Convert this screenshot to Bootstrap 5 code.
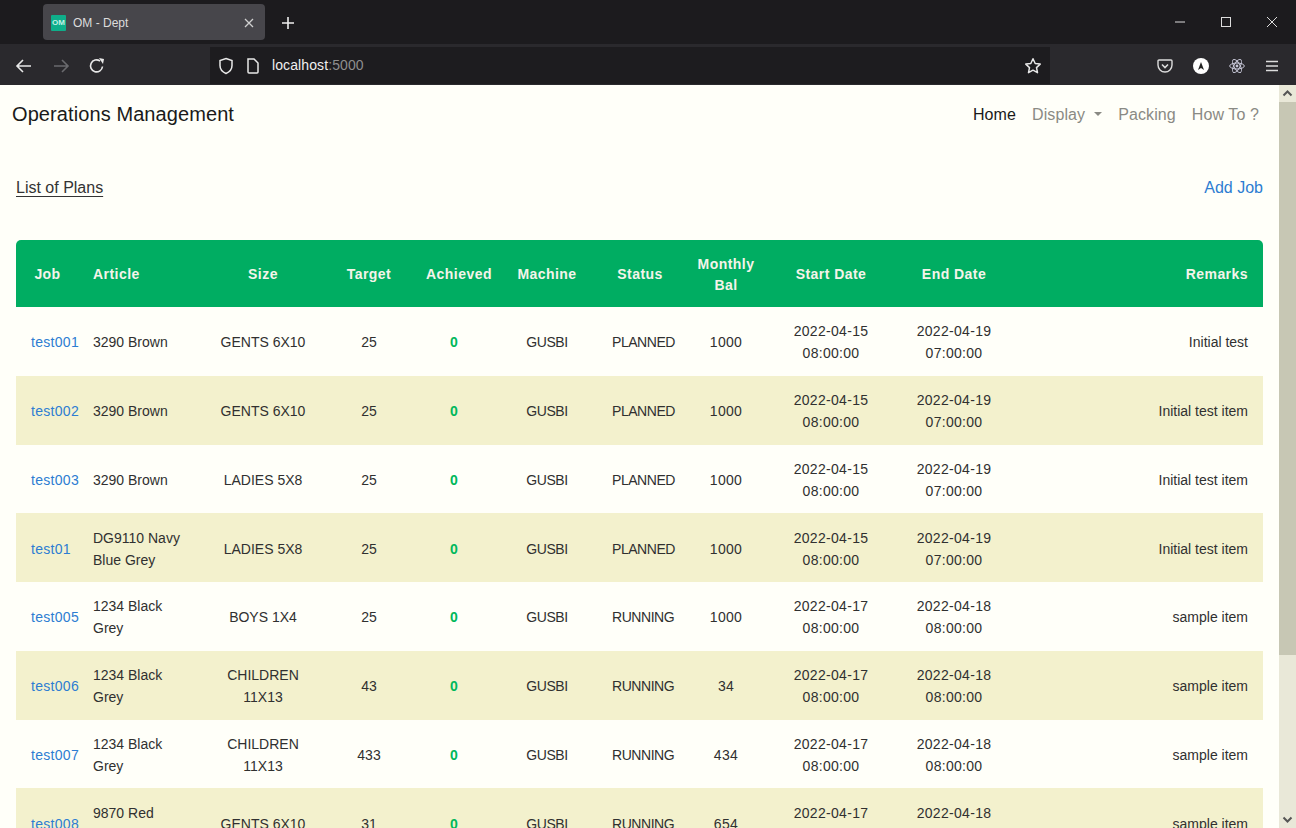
<!DOCTYPE html>
<html lang="en">
<head>
<meta charset="utf-8">
<title>OM - Dept</title>
<link href="https://cdn.jsdelivr.net/npm/bootstrap@5.3.0/dist/css/bootstrap.min.css" rel="stylesheet">
<style>
html,body{height:828px;overflow:hidden;background:#fffff9;font-family:"Liberation Sans",Arial,sans-serif}
.tabstrip{height:44px;background:#1c1b1e;padding-left:43px;padding-top:4px}
.tabbox{width:222px;height:36px;background:#47464b;border-radius:4px;color:#dcdcdc;font-size:12px;padding:1px 11px 0 8px}
.tabname{margin-left:-1px}
.favi{width:15px;height:16px;background:#0fae8a;color:#c4f0e6;font-size:8px;font-weight:700;line-height:16px;text-align:center;border-radius:1px}
.tabplus{margin:12px 0 0 16px}
.winbtns{padding-right:19px;gap:36px;height:36px}
.toolbar{height:41px;background:#2a292d;padding:2px 17px 0 15px}
.navbtns{gap:19px}
.urlbox{margin-left:105px;width:840px;height:37px;background:#1d1c1f;color:#f0f0f0;font-size:14px;padding:0 8px 0 8px}
.urlbox small{color:#8e8e8e;font-size:14px}
.docicon{margin-left:12px}
.hostname{margin-left:12px;letter-spacing:.1px}
.rightbtns{gap:20px}
.pagewrap{height:743px}
.pagebody{flex:1 1 auto;min-width:0;overflow:hidden}
.vscroll{width:17px;flex:none;background:#e9e8d8}
.vthumb{height:553px;background:#c7c7b4}
.appbar{height:57px;padding:1px 12px 0 12px}
.appbrand{font-size:20px;color:#1a1a1a;letter-spacing:.09px}
.appbar .nav{margin-top:2px}
.appbar .nav-link{color:#8a8a84;font-size:16px;padding:8px;letter-spacing:.1px}
.appbar .nav-link.now{color:#1a1a1a}
.appbar .dropdown-toggle::after{margin-left:.56em}
.headline{padding:0 16px;margin-top:33px;height:25px;font-size:16px}
.headline .plans{color:#333;text-decoration:underline;text-underline-offset:3px}
.headline .addjob{color:#2d7dd2;text-decoration:none}
.tablewrap{padding:0 16px;margin-top:40px}
.plan{table-layout:fixed;width:1247px;font-size:14px;line-height:22px;color:#2b2b2b;margin:0;border-collapse:separate;border-spacing:0}
.plan th{background:#00ad62;color:#f4f4ea;font-size:14px;font-weight:700;letter-spacing:.45px;line-height:21px;padding:13px 0 11px;height:67px;text-align:center;vertical-align:middle;border:0}
.plan th:first-child{border-top-left-radius:5px}
.plan th:last-child{border-top-right-radius:5px}
.plan td{height:68.75px;padding:13px 14px 11px;text-align:center;vertical-align:middle;border:0;background:transparent;color:#303030}
.plan tbody tr:nth-child(even) td{background:#f3f1cd}
.plan th.lft,.plan td.lft{text-align:left;padding-left:14px}
.plan th.rgt,.plan td.rgt{text-align:right;padding-right:15px}
.plan td.jobc{padding:13px 0 11px 15px;text-align:left;letter-spacing:.3px}
.plan td a{color:#2d7dd2;text-decoration:none}
.plan td.zero{color:#00b85c;font-weight:700;padding-right:24px}
.plan td.caps{letter-spacing:-.45px}
.plan td.statc{text-align:left;padding-left:24px;padding-right:0;letter-spacing:-.45px}
.plan td.numc{letter-spacing:.3px}
</style>
</head>
<body class="m-0">
<div class="tabstrip d-flex align-items-start">
  <div class="tabbox d-flex align-items-center gap-2">
    <span class="favi">OM</span><span class="tabname flex-grow-1">OM - Dept</span>
    <svg width="10" height="10" viewBox="0 0 10 10"><path d="M1 1l8 8M9 1l-8 8" stroke="#d0d0d0" stroke-width="1.3"/></svg>
  </div>
  <svg class="tabplus" width="14" height="14" viewBox="0 0 14 14"><path d="M7 1v12M1 7h12" stroke="#eee" stroke-width="1.6"/></svg>
  <div class="winbtns d-flex align-items-center ms-auto">
    <svg width="10" height="10" viewBox="0 0 10 10"><path d="M0 5h10" stroke="#ddd" stroke-width="1"/></svg>
    <svg width="10" height="10" viewBox="0 0 10 10"><rect x=".5" y=".5" width="9" height="9" fill="none" stroke="#ddd"/></svg>
    <svg width="10" height="10" viewBox="0 0 10 10"><path d="M0 0l10 10M10 0L0 10" stroke="#ddd"/></svg>
  </div>
</div>
<div class="toolbar d-flex align-items-center">
  <div class="navbtns d-flex align-items-center">
    <svg width="18" height="16" viewBox="0 0 18 16"><path d="M16 8H2M8 2L2 8l6 6" fill="none" stroke="#e8e8e8" stroke-width="1.6"/></svg>
    <svg width="18" height="16" viewBox="0 0 18 16"><path d="M2 8h14M10 2l6 6-6 6" fill="none" stroke="#6a6a6e" stroke-width="1.6"/></svg>
    <svg width="16" height="16" viewBox="0 0 16 16"><path d="M13.5 8.5A6 6 0 1 1 11 3" fill="none" stroke="#e8e8e8" stroke-width="1.6"/><path d="M10 0l5 1-1 5z" fill="#e8e8e8"/></svg>
  </div>
  <div class="urlbox d-flex align-items-center">
    <svg width="16" height="18" viewBox="0 0 16 18"><path d="M8 1.500l6 2v5c0 4-2.500 6.500-6 8-3.500-1.500-6-4-6-8v-5z" fill="none" stroke="#e8e8e8" stroke-width="1.5"/></svg>
    <svg class="docicon" width="14" height="16" viewBox="0 0 14 16"><path d="M2 1h6l4 4v9a1 1 0 0 1-1 1H3a1 1 0 0 1-1-1z" fill="none" stroke="#e8e8e8" stroke-width="1.5"/></svg>
    <span class="hostname">localhost<small>:5000</small></span>
    <svg class="ms-auto" width="18" height="18" viewBox="0 0 18 18"><path d="M9 1.800l2.200 4.700 5 .6-3.700 3.500 1 5.100L9 13.200l-4.500 2.500 1-5.100L1.800 7.100l5-.6z" fill="none" stroke="#e8e8e8" stroke-width="1.5" stroke-linejoin="round"/></svg>
  </div>
  <div class="rightbtns d-flex align-items-center ms-auto">
    <svg width="16" height="16" viewBox="0 0 16 16"><path d="M2 2h12a1 1 0 0 1 1 1v4a7 7 0 0 1-14 0V3a1 1 0 0 1 1-1z" fill="none" stroke="#dcdcdc" stroke-width="1.4"/><path d="M5 6.500l3 3 3-3" fill="none" stroke="#dcdcdc" stroke-width="1.6"/></svg>
    <svg width="16" height="16" viewBox="0 0 16 16"><circle cx="8" cy="8" r="8" fill="#fff"/><path d="M5 12l3-8 3 8-3-2z" fill="#222"/></svg>
    <svg width="16" height="16" viewBox="0 0 16 16"><g fill="none" stroke="#c8c8d8" stroke-width="1"><ellipse cx="8" cy="8" rx="7.300" ry="3"/><ellipse cx="8" cy="8" rx="7.300" ry="3" transform="rotate(60 8 8)"/><ellipse cx="8" cy="8" rx="7.300" ry="3" transform="rotate(120 8 8)"/></g><circle cx="8" cy="8" r="1.400" fill="#c8c8d8"/></svg>
    <svg width="14" height="12" viewBox="0 0 14 12"><path d="M1 1.500h12M1 6h12M1 10.500h12" stroke="#dcdcdc" stroke-width="1.5"/></svg>
  </div>
</div>
<div class="pagewrap d-flex">
  <div class="pagebody">
    <nav class="appbar d-flex align-items-center justify-content-between">
      <span class="appbrand">Operations Management</span>
      <ul class="nav">
        <li class="nav-item"><a class="nav-link now" href="#">Home</a></li>
        <li class="nav-item"><a class="nav-link dropdown-toggle" href="#">Display</a></li>
        <li class="nav-item"><a class="nav-link" href="#">Packing</a></li>
        <li class="nav-item"><a class="nav-link" href="#">How To ?</a></li>
      </ul>
    </nav>
    <div class="headline d-flex justify-content-between align-items-center">
      <a class="plans" href="#">List of Plans</a>
      <a class="addjob" href="#">Add Job</a>
    </div>
    <div class="tablewrap">
      <table class="plan">
        <colgroup><col style="width:63px"><col style="width:121px"><col style="width:126px"><col style="width:86px"><col style="width:94px"><col style="width:82px"><col style="width:104px"><col style="width:68px"><col style="width:142px"><col style="width:104px"><col style="width:257px"></colgroup>
        <thead><tr><th>Job</th><th class="lft">Article</th><th>Size</th><th>Target</th><th>Achieved</th><th>Machine</th><th>Status</th><th>Monthly Bal</th><th>Start Date</th><th>End Date</th><th class="rgt">Remarks</th></tr></thead>
        <tbody>
          <tr><td class="jobc"><a href="#">test001</a></td><td class="lft">3290 Brown</td><td>GENTS 6X10</td><td>25</td><td class="zero">0</td><td class="caps">GUSBI</td><td class="statc">PLANNED</td><td class="numc">1000</td><td class="numc">2022-04-15 08:00:00</td><td class="numc">2022-04-19 07:00:00</td><td class="rgt">Initial test</td></tr>
          <tr><td class="jobc"><a href="#">test002</a></td><td class="lft">3290 Brown</td><td>GENTS 6X10</td><td>25</td><td class="zero">0</td><td class="caps">GUSBI</td><td class="statc">PLANNED</td><td class="numc">1000</td><td class="numc">2022-04-15 08:00:00</td><td class="numc">2022-04-19 07:00:00</td><td class="rgt">Initial test item</td></tr>
          <tr><td class="jobc"><a href="#">test003</a></td><td class="lft">3290 Brown</td><td>LADIES 5X8</td><td>25</td><td class="zero">0</td><td class="caps">GUSBI</td><td class="statc">PLANNED</td><td class="numc">1000</td><td class="numc">2022-04-15 08:00:00</td><td class="numc">2022-04-19 07:00:00</td><td class="rgt">Initial test item</td></tr>
          <tr><td class="jobc"><a href="#">test01</a></td><td class="lft">DG9110 Navy Blue Grey</td><td>LADIES 5X8</td><td>25</td><td class="zero">0</td><td class="caps">GUSBI</td><td class="statc">PLANNED</td><td class="numc">1000</td><td class="numc">2022-04-15 08:00:00</td><td class="numc">2022-04-19 07:00:00</td><td class="rgt">Initial test item</td></tr>
          <tr><td class="jobc"><a href="#">test005</a></td><td class="lft">1234 Black Grey</td><td>BOYS 1X4</td><td>25</td><td class="zero">0</td><td class="caps">GUSBI</td><td class="statc">RUNNING</td><td class="numc">1000</td><td class="numc">2022-04-17 08:00:00</td><td class="numc">2022-04-18 08:00:00</td><td class="rgt">sample item</td></tr>
          <tr><td class="jobc"><a href="#">test006</a></td><td class="lft">1234 Black Grey</td><td>CHILDREN 11X13</td><td>43</td><td class="zero">0</td><td class="caps">GUSBI</td><td class="statc">RUNNING</td><td class="numc">34</td><td class="numc">2022-04-17 08:00:00</td><td class="numc">2022-04-18 08:00:00</td><td class="rgt">sample item</td></tr>
          <tr><td class="jobc"><a href="#">test007</a></td><td class="lft">1234 Black Grey</td><td>CHILDREN 11X13</td><td>433</td><td class="zero">0</td><td class="caps">GUSBI</td><td class="statc">RUNNING</td><td class="numc">434</td><td class="numc">2022-04-17 08:00:00</td><td class="numc">2022-04-18 08:00:00</td><td class="rgt">sample item</td></tr>
          <tr><td class="jobc"><a href="#">test008</a></td><td class="lft">9870 Red Black</td><td>GENTS 6X10</td><td>31</td><td class="zero">0</td><td class="caps">GUSBI</td><td class="statc">RUNNING</td><td class="numc">654</td><td class="numc">2022-04-17 08:00:00</td><td class="numc">2022-04-18 08:00:00</td><td class="rgt">sample item</td></tr>
        </tbody>
      </table>
    </div>
  </div>
  <div class="vscroll d-flex flex-column align-items-stretch">
    <svg width="17" height="17" viewBox="0 0 17 17"><path d="M4.500 10.500L8.500 6.500l4 4" fill="none" stroke="#555" stroke-width="2"/></svg>
    <div class="vthumb"></div>
    <svg class="mt-auto" width="17" height="17" viewBox="0 0 17 17"><path d="M4.500 6.500l4 4 4-4" fill="none" stroke="#555" stroke-width="2"/></svg>
  </div>
</div>
<script src="https://cdn.jsdelivr.net/npm/bootstrap@5.3.0/dist/js/bootstrap.bundle.min.js"></script>
</body>
</html>
